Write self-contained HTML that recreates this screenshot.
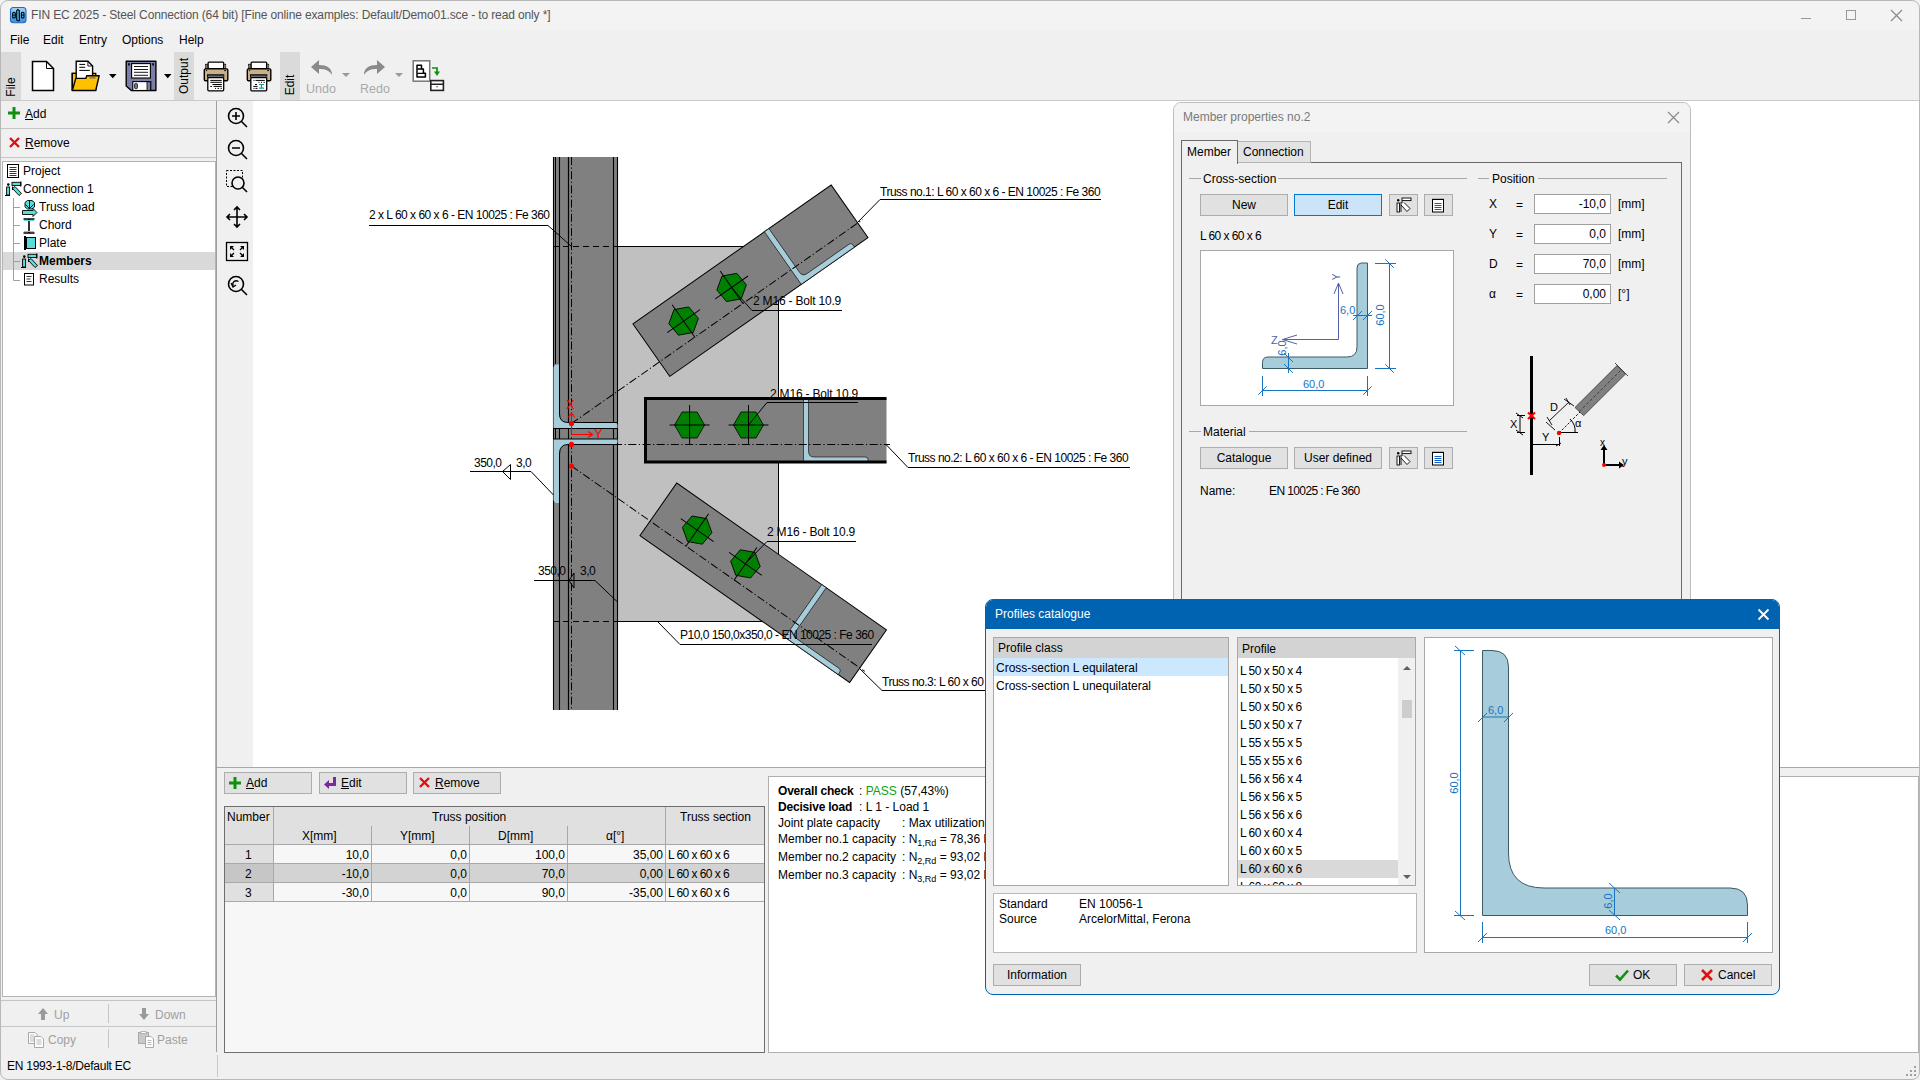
<!DOCTYPE html>
<html><head><meta charset="utf-8">
<style>
*{box-sizing:border-box;margin:0;padding:0}
html,body{width:1920px;height:1080px;overflow:hidden;background:#f0f0f0;font-family:"Liberation Sans",sans-serif;font-size:12px;color:#000}
.a{position:absolute}
.t{position:absolute;white-space:nowrap;line-height:14px}
.btn{position:absolute;background:#e1e1e1;border:1px solid #adadad}
.u{text-decoration:underline}
svg{position:absolute;overflow:visible}
.dl{letter-spacing:-0.5px}
</style></head><body>

<!-- window frame -->
<div class="a" style="left:0;top:0;width:1920px;height:30px;background:#f3f3f3"></div>
<div class="a" style="left:0;top:0;width:1920px;height:1080px;border:1px solid #b8b8b8;border-radius:8px;pointer-events:none;z-index:50"></div>
<!-- title -->
<svg style="left:0;top:0" width="30" height="30"><defs><linearGradient id="ig" x1="0" y1="0" x2="0" y2="1"><stop offset="0" stop-color="#a8d4f4"/><stop offset="1" stop-color="#3f8ad6"/></linearGradient></defs><rect x="10.5" y="7.5" width="15.5" height="15.3" rx="3" fill="url(#ig)" stroke="#1f6cc4" stroke-width="1.1"/><rect x="12.7" y="12.3" width="2.6" height="5.6" rx="1" fill="#3bc0ff" stroke="#000" stroke-width="1.1"/><path d="M12.7 15.1H15.3" stroke="#000" stroke-width=".9"/><rect x="21.4" y="12.3" width="2.6" height="5.6" rx="1" fill="#3bc0ff" stroke="#000" stroke-width="1.1"/><path d="M21.4 15.1H24" stroke="#000" stroke-width=".9"/><path d="M16.7 10.8L17.7 9.5L19.3 10.5V20.7L18.3 21L16.7 20Z" fill="#3bc0ff" stroke="#000" stroke-width="1.1"/></svg>
<div class="t" style="left:31px;top:8px;color:#555;letter-spacing:-0.13px">FIN EC 2025 - Steel Connection (64 bit) [Fine online examples: Default/Demo01.sce - to read only *]</div>
<div class="a" style="left:1801px;top:18px;width:10px;height:1px;background:#999"></div>
<div class="a" style="left:1846px;top:10px;width:10px;height:10px;border:1px solid #999"></div>
<svg style="left:1891px;top:10px" width="11" height="11"><path d="M0 0L11 11M11 0L0 11" stroke="#888" stroke-width="1.2"/></svg>
<!-- menu -->
<div class="t" style="left:10px;top:33px">File</div>
<div class="t" style="left:43px;top:33px">Edit</div>
<div class="t" style="left:79px;top:33px">Entry</div>
<div class="t" style="left:122px;top:33px">Options</div>
<div class="t" style="left:179px;top:33px">Help</div>
<!-- toolbar -->

<div class="a" style="left:1px;top:52px;width:20px;height:48px;background:#dadada"></div>
<div class="t" style="left:-5px;top:80px;transform:rotate(-90deg);width:32px;text-align:center">File</div>
<div class="a" style="left:174px;top:52px;width:20px;height:48px;background:#dadada"></div>
<div class="t" style="left:160px;top:69px;transform:rotate(-90deg);width:48px;text-align:center">Output</div>
<div class="a" style="left:280px;top:52px;width:20px;height:48px;background:#dadada"></div>
<div class="t" style="left:274px;top:78px;transform:rotate(-90deg);width:32px;text-align:center">Edit</div>
<svg style="left:31px;top:60px" width="26" height="32" viewBox="0 0 26 32"><path d="M1.5 1.5H15.5L22.5 8.5V30.5H1.5Z" fill="#fff" stroke="#000" stroke-width="1.5"/><path d="M15.5 1.5V8.5H22.5" fill="none" stroke="#000" stroke-width="1"/></svg>
<svg style="left:0;top:0" width="100" height="100"><path d="M72.3 90.5V73.4H77M92.6 73.7H95.7" fill="#ffc000" stroke="#000" stroke-width="1.4"/><rect x="72.3" y="73.4" width="23.4" height="17" fill="#ffc000"/><path d="M72.3 90.5V73.4H95.7V90.5" fill="none" stroke="#000" stroke-width="1.4"/><path d="M76.2 78V61.3H87.9L92.6 66V78" fill="#fff" stroke="#000" stroke-width="1.4"/><path d="M87.9 61.3V66H92.6" fill="none" stroke="#000" stroke-width=".9"/><path d="M79.3 64.4H85.2M79.3 67.3H85.2M79.3 70.4H89.8" stroke="#000" stroke-width="1"/><path d="M72.3 90.5L75.8 78.4H85.9L86.7 75.7H99.2L95.7 90.5Z" fill="#ffc000" stroke="#000" stroke-width="1.4" stroke-linejoin="round"/><path d="M89.5 77.9H95.5" stroke="#6a6a8a" stroke-width="1.3"/></svg>
<svg style="left:109px;top:74px" width="8" height="5"><path d="M0 0H7.5L3.75 4.3Z" fill="#000"/></svg>
<svg style="left:0;top:0" width="170" height="100"><path d="M126.2 61.3H155.9V90.5H131.3L126.2 85.9Z" fill="#7b7ea6" stroke="#000" stroke-width="1.4" stroke-linejoin="round"/><rect x="131.6" y="63.6" width="18.8" height="14.4" fill="#fff" stroke="#000" stroke-width="1.1"/><path d="M134 66.5H148M134 69.5H148M134 72.3H148M134 75.3H148" stroke="#000" stroke-width=".9"/><rect x="128.1" y="63.2" width="1.6" height="2.3" fill="#000"/><rect x="152.3" y="63.2" width="1.6" height="2.3" fill="#000"/><rect x="132.8" y="81.6" width="18" height="8.9" fill="#fff" stroke="#000" stroke-width="1.1"/><rect x="147" y="81.8" width="3.6" height="8.6" fill="#7b7ea6" stroke="#000" stroke-width=".8"/><rect x="134.6" y="83.6" width="2.8" height="5" rx=".8" fill="#7b7ea6" stroke="#000" stroke-width=".8"/></svg>
<svg style="left:164px;top:74px" width="8" height="5"><path d="M0 0H7.5L3.75 4.3Z" fill="#000"/></svg>
<svg style="left:0;top:0" width="300" height="100">
<g id="prn">
 <rect x="205.6" y="64.2" width="2.8" height="4.5" fill="#8a7a5a" stroke="#000" stroke-width=".6"/><rect x="223.4" y="64.2" width="2.4" height="4.5" fill="#c8b088" stroke="#000" stroke-width=".6"/>
 <rect x="208.1" y="62.1" width="15.6" height="6.5" rx="1" fill="#fff" stroke="#000" stroke-width="1.3"/>
 <rect x="204.3" y="68.9" width="23.5" height="11.8" rx="1.2" fill="#c8b088" stroke="#000" stroke-width="1.4"/>
 <circle cx="206.5" cy="70.6" r=".7" fill="#000"/><rect x="224.2" y="70.1" width="1.8" height="1" fill="#000"/>
 <rect x="207" y="74.2" width="17.3" height="3.4" fill="#111"/><path d="M208 76.2h15.5" stroke="#999" stroke-width="1"/>
 <rect x="207.8" y="77.7" width="15.9" height="13.1" rx="1" fill="#fff" stroke="#000" stroke-width="1.3"/>
</g>
 <path d="M210.3 80.4H221.8M210.3 82.3H221.8M212.5 84.5H221.8M210.3 86.4H212M213.5 86.4H221.8M215 88.4H216M217.5 88.4H219M220.5 88.4H221.8" stroke="#000" stroke-width="1"/>
 <use href="#prn" x="43"/>
 <path d="M253.5 80.4H254.5M255.5 80.4H264.8M258.5 82.3H259.5M261 82.3H262M263.5 82.3H264.8M255 84.5H257M253.3 86.4H257.5M253.5 88.4H254.5M255.5 88.4H257.5" stroke="#000" stroke-width="1"/>
 <path d="M259 84.5H264M261.5 84.5V88.2M259 88.2H264" stroke="#1a9a9a" stroke-width="1.2"/>
</svg>
<svg style="left:310px;top:58px" width="24" height="19" viewBox="0 0 24 19"><path d="M22 17C22 10 17 7 9 7V2L1 9L9 16V11C15 11 19 12 22 17Z" fill="#8a8a8a"/></svg>
<div class="t" style="left:306px;top:82px;color:#a9a9a9;font-size:12.5px">Undo</div>
<svg style="left:342px;top:73px" width="10" height="6"><path d="M0 0H8L4 4Z" fill="#999"/></svg>
<svg style="left:362px;top:58px" width="24" height="19" viewBox="0 0 24 19"><path d="M2 17C2 10 7 7 15 7V2L23 9L15 16V11C9 11 5 12 2 17Z" fill="#8a8a8a"/></svg>
<div class="t" style="left:360px;top:82px;color:#a9a9a9;font-size:12.5px">Redo</div>
<svg style="left:395px;top:73px" width="10" height="6"><path d="M0 0H8L4 4Z" fill="#999"/></svg>
<svg style="left:0;top:0" width="460" height="100"><rect x="413.2" y="60.8" width="16.5" height="20.4" fill="#fff" stroke="#777" stroke-width="1.5"/><path d="M417 65.3H421.5V69H423.4V73.3H425.4V77H417Z" fill="none" stroke="#000" stroke-width="1.5" stroke-linejoin="round"/><path d="M417.5 69H421.5M417.5 73.3H423.4" stroke="#000" stroke-width="1.3"/><path d="M432 68H437V72" fill="none" stroke="#109010" stroke-width="1.7"/><path d="M434 71.5H440L437 76Z" fill="#109010"/><rect x="430.8" y="80.6" width="12.6" height="9.8" fill="#fff" stroke="#222" stroke-width="1.6"/><path d="M431 84.2H443.4M437 86.3v1" stroke="#222" stroke-width="1.4"/></svg>

<div class="a" style="left:216px;top:101px;width:1px;height:951px;background:#a0a0a0"></div>
<div class="a" style="left:1px;top:128px;width:215px;height:1px;background:#c6c6c6"></div>
<div class="a" style="left:1px;top:157px;width:215px;height:1px;background:#c6c6c6"></div>
<svg style="left:8px;top:107px" width="12" height="12"><path d="M6 0V12M0 6H12" stroke="#109010" stroke-width="3"/></svg>
<div class="t" style="left:25px;top:107px"><span class="u">A</span>dd</div>
<svg style="left:9px;top:137px" width="11" height="11"><path d="M1 1L10 10M10 1L1 10" stroke="#e01010" stroke-width="2.4"/></svg>
<div class="t" style="left:25px;top:136px"><span class="u">R</span>emove</div>
<div class="a" style="left:2px;top:161px;width:214px;height:836px;background:#fff;border:1px solid #b4b4b4"></div>
<div class="a" style="left:3px;top:252px;width:212px;height:18px;background:#d9d9d9"></div>
<svg style="left:0;top:0" width="216" height="300">
 <path d="M13.5 198V280.5H20M13.5 207.5H20M13.5 225.5H20M13.5 243.5H20M13.5 261.5H20" stroke="#a0a0a0" fill="none"/>
 <rect x="7.5" y="164.5" width="11" height="13" fill="#fff" stroke="#000"/><path d="M9.5 167.5h7M9.5 169.5h7M9.5 171.5h7M9.5 173.5h7M9.5 175.5h7" stroke="#000" stroke-width=".8"/>
 <g id="cn" transform="translate(5,181)"><circle cx="3.3" cy="3.6" r="1.3" fill="#000"/><rect x="1.6" y="6" width="3" height="8" fill="#5dd" stroke="#000" stroke-width=".9"/><path d="M0 14.5H5" stroke="#000"/><rect x="7" y="1.3" width="8.7" height="3.2" fill="#5dd" stroke="#000" stroke-width=".9"/><path d="M15.8 0.5V5.5" stroke="#000" stroke-width="1.2"/><path d="M7.5 7.5L10 5.5L16.5 12.5L14 14.5Z" fill="#5dd" stroke="#000" stroke-width=".9"/><path d="M7.5 5.5V9" stroke="#000" stroke-width="1"/></g>
 <use href="#cn" x="16" y="72"/>
 <g transform="translate(22,200)"><path d="M3 7V2.5L5.5 0.5H10L12.5 2.5V7L10 9H5.5Z" fill="#5dd" stroke="#000" stroke-width=".9"/><path d="M7.5 0.5V9M3.5 4.5L7.5 8.5L11.5 4.5" stroke="#000" stroke-width=".9" fill="none"/><path d="M0.5 10.5H11V8.5L15 12.5L11 16.5V14.5H0.5Z" fill="#5dd" stroke="#000" stroke-width=".9"/></g>
 <g transform="translate(23,218)"><path d="M0.5 1H11.5M0.5 15H11.5M6 1V15" stroke="#000" stroke-width="1.6"/><path d="M1 2.5H11M1 13.5H11" stroke="#5dd" stroke-width="1.2"/></g>
 <g transform="translate(24,236)"><rect x="2.5" y="1.5" width="9" height="11" fill="#5dd" stroke="#000"/><path d="M1 0V14" stroke="#000" stroke-width="2"/></g>
 <g transform="translate(24,273)"><rect x="0.5" y="0.5" width="9" height="11.5" fill="#fff" stroke="#000"/><path d="M2.5 3.5h5M2.5 6h4M2.5 8.5h5" stroke="#000" stroke-width=".8"/></g>
</svg>
<div class="t" style="left:23px;top:164px">Project</div>
<div class="t" style="left:23px;top:182px">Connection 1</div>
<div class="t" style="left:39px;top:200px">Truss load</div>
<div class="t" style="left:39px;top:218px">Chord</div>
<div class="t" style="left:39px;top:236px">Plate</div>
<div class="t" style="left:39px;top:254px;font-weight:bold">Members</div>
<div class="t" style="left:39px;top:272px">Results</div>
<div class="a" style="left:1px;top:1000px;width:215px;height:1px;background:#c6c6c6"></div>
<div class="a" style="left:1px;top:1026px;width:215px;height:1px;background:#c6c6c6"></div>
<div class="a" style="left:108px;top:1004px;width:1px;height:19px;background:#c6c6c6"></div>
<div class="a" style="left:108px;top:1029px;width:1px;height:19px;background:#c6c6c6"></div>
<svg style="left:37px;top:1008px" width="12" height="13"><path d="M6 0L11 6H8V12H4V6H1Z" fill="#9a9a9a"/></svg>
<div class="t" style="left:54px;top:1008px;color:#a0a0a0">Up</div>
<svg style="left:138px;top:1008px" width="12" height="13"><path d="M6 12L11 6H8V0H4V6H1Z" fill="#9a9a9a"/></svg>
<div class="t" style="left:155px;top:1008px;color:#a0a0a0">Down</div>
<svg style="left:28px;top:1032px" width="18" height="16"><path d="M.5 .5H7L9 2.5V11.5H.5Z" fill="#fff" stroke="#a8a8a8"/><path d="M2 3h4M2 5h5M2 7h5M2 9h5" stroke="#a8a8a8" stroke-width=".8"/><path d="M6.5 4.5H13L15.5 7V15.5H6.5Z" fill="#fff" stroke="#a8a8a8"/><path d="M8.5 8h5M8.5 10h5M8.5 12h5" stroke="#a8a8a8" stroke-width=".8"/></svg>
<div class="t" style="left:48px;top:1033px;color:#a0a0a0">Copy</div>
<svg style="left:138px;top:1031px" width="18" height="17"><rect x=".5" y="1.5" width="10" height="11" fill="#c8c8c8" stroke="#a8a8a8"/><rect x="3" y=".5" width="5" height="2" fill="#fff" stroke="#a8a8a8" stroke-width=".8"/><path d="M7.5 5.5H13L15.5 8V16.5H7.5Z" fill="#fff" stroke="#a8a8a8"/><path d="M9.5 9.5h4M9.5 11.5h4M9.5 13.5h4" stroke="#a8a8a8" stroke-width=".8"/></svg>
<div class="t" style="left:157px;top:1033px;color:#a0a0a0">Paste</div>

<div class="a" style="left:0;top:100px;width:1920px;height:1px;background:#c8c8c8"></div>
<div class="a" style="left:253px;top:101px;width:1667px;height:667px;background:#fff"></div>

<svg style="left:226px;top:106px" width="24" height="190" viewBox="0 0 24 190">
 <g fill="none" stroke="#000" stroke-width="1.6">
  <circle cx="10" cy="10" r="7.5"/><path d="M15.5 15.5L21 21M6 10H14M10 6V14"/>
  <circle cx="10" cy="42" r="7.5"/><path d="M15.5 47.5L21 53M6 42H14"/>
  <rect x="0.5" y="64.5" width="16" height="16" stroke-dasharray="2 1.5" stroke-width="1"/>
  <circle cx="12" cy="77" r="6" fill="#f0f0f0"/><path d="M16.5 81.5L21 86"/>
  <path d="M11 101V121M1 111H21M8 104L11 101L14 104M8 118L11 121L14 118M4 108L1 111L4 114M18 108L21 111L18 114"/>
  <rect x="0.5" y="136.5" width="21" height="18" stroke-width="1.3"/>
  <path d="M4.5 140.5L8 144M17.5 140.5L14 144M4.5 150.5L8 147M17.5 150.5L14 147" stroke-width="1.3"/><path d="M4 140H8L4 144ZM18 140H14L18 144ZM4 151H8L4 147ZM18 151H14L18 147Z" fill="#000" stroke="none"/>
  <circle cx="10" cy="178" r="7.5"/><path d="M15.5 183.5L21 189"/><path d="M7 180C6 176 9 173.5 12.5 175.5" stroke-width="1.4"/><path d="M5 177L7 181L10 179" stroke-width="1.2"/>
 </g>
</svg>

<svg style="left:0;top:0" width="1920" height="1080" viewBox="0 0 1920 1080">
<defs><clipPath id="cv"><rect x="253" y="101" width="1667" height="666"/></clipPath></defs>
<g clip-path="url(#cv)">
<rect x="618" y="246.5" width="160" height="375" fill="#c0c0c0"/>
<path d="M553 246.5H778.5V621.5H553" fill="none" stroke="#000" stroke-width="1"/>
<path d="M553 246.5H618M553 621.5H618" stroke="#c0c0c0" stroke-width="1.2"/>
<rect x="553" y="157" width="65" height="553" fill="#808080"/>
<path d="M553.5 157V710" stroke="#000" stroke-width="1.1"/>
<path d="M559.5 157V710" stroke="#000" stroke-width="1.1"/>
<path d="M568.5 157V710" stroke="#000" stroke-width="1.1"/>
<path d="M613.5 157V710" stroke="#000" stroke-width="1.1"/>
<path d="M617.5 157V710" stroke="#000" stroke-width="1.1"/>
<path d="M555.5 157V364M555.5 428V439" stroke="#000" stroke-width="1"/>
<path d="M571.5 157V710" stroke="#000" stroke-width="1" stroke-dasharray="8 2.5 1.2 2.5"/>
<path d="M553 246.5H618M553 621.5H618" stroke="#000" stroke-width="1.2" stroke-dasharray="6 4"/>
<path d="M553.5 428.5V368Q553.5 364.5 557 364.5H559.5V414Q559.5 422.5 568 422.5H614Q617.5 422.5 617.5 425.5V428.5Z" fill="#a6cdd9"/>
<path d="M553.5 439V499Q553.5 503 557 503H559.5V454Q559.5 444.5 568 444.5H614Q617.5 444.5 617.5 442V439Z" fill="#a6cdd9"/>
<path d="M559.5 364.5V414Q559.5 422.5 568 422.5H617.5M553 428.5H618M553 439H618M559.5 503V454Q559.5 444.5 568 444.5H617.5" fill="none" stroke="#000" stroke-width="1"/>
<path d="M568.5 157V422M568.5 445V710" stroke="#000" stroke-width="1.1"/>
<path d="M778.5 246.5V621.5" stroke="#000" stroke-width="1"/>
<g transform="translate(571.5 423.5) rotate(-35)"><rect x="107.5" y="-46.4" width="242.0" height="64.2" fill="#808080" stroke="#000" stroke-width="1"/><path d="M268 -46.4H273.5V7Q273.5 12.3 279 12.3H330Q333 12.3 333 15V17.8H268Z" fill="#a6cdd9" stroke="#000" stroke-width=".6"/><path d="M0 0H355.5" stroke="#000" stroke-width="1" stroke-dasharray="8 2.5 1.2 2.5"/><polygon points="162.9,-28.2 164.2,-13.3 151.9,-4.7 138.3,-11.0 137.0,-25.9 149.3,-34.5" fill="#008000" stroke="#000" stroke-width=".8"/><path d="M130.6 -19.6H170.6M150.6 -39.6V0.3999999999999986" stroke="#000" stroke-width="1"/><polygon points="221.5,-28.2 222.8,-13.3 210.5,-4.7 196.9,-11.0 195.6,-25.9 207.9,-34.5" fill="#008000" stroke="#000" stroke-width=".8"/><path d="M189.2 -19.6H229.2M209.2 -39.6V0.3999999999999986" stroke="#000" stroke-width="1"/></g>
<g transform="translate(571.5 466) rotate(35)"><rect x="96" y="-46.4" width="256" height="64.2" fill="#808080" stroke="#000" stroke-width="1"/><path d="M273 -46.4H278.5V7Q278.5 12.3 284 12.3H335Q338 12.3 338 15V17.8H273Z" fill="#a6cdd9" stroke="#000" stroke-width=".6"/><path d="M0 0H358" stroke="#000" stroke-width="1" stroke-dasharray="8 2.5 1.2 2.5"/><polygon points="152.0,-11.0 138.4,-4.7 126.1,-13.3 127.4,-28.2 141.0,-34.5 153.3,-25.9" fill="#008000" stroke="#000" stroke-width=".8"/><path d="M119.69999999999999 -19.6H159.7M139.7 -39.6V0.3999999999999986" stroke="#000" stroke-width="1"/><polygon points="210.9,-11.0 197.3,-4.7 185.0,-13.3 186.3,-28.2 199.9,-34.5 212.2,-25.9" fill="#008000" stroke="#000" stroke-width=".8"/><path d="M178.6 -19.6H218.6M198.6 -39.6V0.3999999999999986" stroke="#000" stroke-width="1"/></g>
<rect x="645.5" y="398" width="241" height="64.5" fill="#808080"/>
<path d="M803.5 398H808.5V451Q808.5 457 814 457H865Q868 457 868 459.5V462.5H803.5Z" fill="#a6cdd9" stroke="#000" stroke-width=".6"/>
<path d="M886.5 398.5H645.5V462H886.5" fill="none" stroke="#000" stroke-width="3"/>
<path d="M571.5 444.5H890" stroke="#000" stroke-width="1" stroke-dasharray="8 2.5 1.2 2.5"/>
<polygon points="704.6,425.0 697.1,438.0 682.1,438.0 674.6,425.0 682.1,412.0 697.1,412.0" fill="#008000" stroke="#000" stroke-width=".8"/>
<path d="M669.6 425H709.6M689.6 405V445" stroke="#000" stroke-width="1"/>
<polygon points="763.5,425.0 756.0,438.0 741.0,438.0 733.5,425.0 741.0,412.0 756.0,412.0" fill="#008000" stroke="#000" stroke-width=".8"/>
<path d="M728.5 425H768.5M748.5 405V445" stroke="#000" stroke-width="1"/>
<g stroke="#f00" fill="none" stroke-width="1.1"><path d="M571.5 434.5V414M568.5 417L571.5 413L574.5 417M571.5 434.5H592M588 431.5L592.5 434.5L588 437.5"/></g>
<circle cx="571.5" cy="423.5" r="2.6" fill="#f00"/>
<circle cx="571.5" cy="444.4" r="2.6" fill="#f00"/>
<circle cx="571.5" cy="466" r="2.6" fill="#f00"/>
<path d="M369 225.5H548L571 246" stroke="#000" stroke-width="1" fill="none"/>
<path d="M857 223L880 199.5H1101" stroke="#000" stroke-width="1" fill="none"/>
<path d="M731 287L752 310.5H842" stroke="#000" stroke-width="1" fill="none"/>
<path d="M748.5 425L767 402.5H858" stroke="#000" stroke-width="1" fill="none"/>
<path d="M886 444.5L908 467.5H1130" stroke="#000" stroke-width="1" fill="none"/>
<path d="M470 471.5H531L553.5 495" stroke="#000" stroke-width="1" fill="none"/>
<path d="M502.5 471.5L510.5 464.5V479.5Z" stroke="#000" stroke-width="1" fill="none"/>
<path d="M534 580.5H595L617.5 602" stroke="#000" stroke-width="1" fill="none"/>
<path d="M569 580.5L574 573V588Z" stroke="#000" stroke-width="1" fill="none"/>
<path d="M745 564L767 541.5H856" stroke="#000" stroke-width="1" fill="none"/>
<path d="M658 622L680 644.5H872" stroke="#000" stroke-width="1" fill="none"/>
<path d="M860 669L882 690.5H1000" stroke="#000" stroke-width="1" fill="none"/>
</g></svg>
<div class="t" style="left:369px;top:208px;letter-spacing:-0.5px">2 x L 60 x 60 x 6 - EN 10025 : Fe 360</div>
<div class="t" style="left:880px;top:185px;letter-spacing:-0.5px">Truss no.1: L 60 x 60 x 6 - EN 10025 : Fe 360</div>
<div class="t" style="left:753px;top:294px;letter-spacing:-0.2px">2 M16 - Bolt 10.9</div>
<div class="t" style="left:770px;top:387px;letter-spacing:-0.2px">2 M16 - Bolt 10.9</div>
<div class="t" style="left:908px;top:451px;letter-spacing:-0.5px">Truss no.2: L 60 x 60 x 6 - EN 10025 : Fe 360</div>
<div class="t" style="left:474px;top:456px;letter-spacing:-0.5px">350,0</div>
<div class="t" style="left:516px;top:456px;letter-spacing:-0.5px">3,0</div>
<div class="t" style="left:538px;top:564px;letter-spacing:-0.5px">350,0</div>
<div class="t" style="left:580px;top:564px;letter-spacing:-0.5px">3,0</div>
<div class="t" style="left:767px;top:525px;letter-spacing:-0.2px">2 M16 - Bolt 10.9</div>
<div class="t" style="left:680px;top:628px;letter-spacing:-0.5px">P10,0 150,0x350,0 - EN 10025 : Fe 360</div>
<div class="t" style="left:882px;top:675px;letter-spacing:-0.5px">Truss no.3: L 60 x 60 x 6 - EN 10025 : Fe 360</div>
<div class="t" style="left:566px;top:398px;color:#f00;font-size:13px">X</div>
<div class="t" style="left:594px;top:427px;color:#f00;font-size:13px">Y</div>
<div class="a" style="left:217px;top:767px;width:1703px;height:1px;background:#a8a8a8"></div>
<div class="btn" style="left:224px;top:772px;width:88px;height:22px"></div>
<svg style="left:229px;top:777px" width="12" height="12"><path d="M6 0V12M0 6H12" stroke="#109010" stroke-width="3"/></svg>
<div class="t" style="left:246px;top:776px"><span class="u">A</span>dd</div>
<div class="btn" style="left:319px;top:772px;width:88px;height:22px"></div>
<svg style="left:324px;top:777px" width="13" height="12"><path d="M10.5 0V7.5H4" fill="none" stroke="#7a2a9a" stroke-width="3"/><path d="M0 7.5L5 3V12Z" fill="#7a2a9a"/></svg>
<div class="t" style="left:341px;top:776px"><span class="u">E</span>dit</div>
<div class="btn" style="left:413px;top:772px;width:88px;height:22px"></div>
<svg style="left:419px;top:777px" width="11" height="11"><path d="M1 1L10 10M10 1L1 10" stroke="#e01010" stroke-width="2.4"/></svg>
<div class="t" style="left:435px;top:776px"><span class="u">R</span>emove</div>
<!-- table -->
<div class="a" style="left:224px;top:806px;width:541px;height:247px;background:#f7f7f7;border:1px solid #6e6e6e"></div>
<div class="a" style="left:225px;top:807px;width:539px;height:38px;background:#e0e0e0"></div>
<div class="a" style="left:225px;top:845px;width:48px;height:57px;background:#e0e0e0"></div>
<div class="a" style="left:225px;top:864px;width:539px;height:19px;background:#d3d3d3"></div>
<div class="a" style="left:225px;top:864px;width:48px;height:19px;background:#c6c6c6"></div>
<div class="a" style="left:225px;top:844px;width:539px;height:1px;background:#a8a8a8"></div>
<div class="a" style="left:225px;top:863px;width:539px;height:1px;background:#a8a8a8"></div>
<div class="a" style="left:225px;top:882px;width:539px;height:1px;background:#a8a8a8"></div>
<div class="a" style="left:225px;top:901px;width:539px;height:1px;background:#a8a8a8"></div>
<div class="a" style="left:273px;top:807px;width:1px;height:95px;background:#a8a8a8"></div>
<div class="a" style="left:371px;top:826px;width:1px;height:76px;background:#a8a8a8"></div>
<div class="a" style="left:469px;top:826px;width:1px;height:76px;background:#a8a8a8"></div>
<div class="a" style="left:567px;top:826px;width:1px;height:76px;background:#a8a8a8"></div>
<div class="a" style="left:665px;top:807px;width:1px;height:95px;background:#a8a8a8"></div>
<div class="t" style="left:227px;top:810px">Number</div>
<div class="t" style="left:432px;top:810px">Truss position</div>
<div class="t" style="left:680px;top:810px">Truss section</div>
<div class="t" style="left:302px;top:829px">X[mm]</div>
<div class="t" style="left:400px;top:829px">Y[mm]</div>
<div class="t" style="left:498px;top:829px">D[mm]</div>
<div class="t" style="left:606px;top:829px">&#945;[&#176;]</div>
<div class="t" style="left:245px;top:848px">1</div>
<div class="t" style="left:245px;top:867px">2</div>
<div class="t" style="left:245px;top:886px">3</div>
<div class="t" style="left:274px;top:848px;width:95px;text-align:right">10,0</div>
<div class="t" style="left:274px;top:867px;width:95px;text-align:right">-10,0</div>
<div class="t" style="left:274px;top:886px;width:95px;text-align:right">-30,0</div>
<div class="t" style="left:372px;top:848px;width:95px;text-align:right">0,0</div>
<div class="t" style="left:372px;top:867px;width:95px;text-align:right">0,0</div>
<div class="t" style="left:372px;top:886px;width:95px;text-align:right">0,0</div>
<div class="t" style="left:470px;top:848px;width:95px;text-align:right">100,0</div>
<div class="t" style="left:470px;top:867px;width:95px;text-align:right">70,0</div>
<div class="t" style="left:470px;top:886px;width:95px;text-align:right">90,0</div>
<div class="t" style="left:568px;top:848px;width:95px;text-align:right">35,00</div>
<div class="t" style="left:568px;top:867px;width:95px;text-align:right">0,00</div>
<div class="t" style="left:568px;top:886px;width:95px;text-align:right">-35,00</div>
<div class="t" style="left:668px;top:848px;letter-spacing:-0.55px">L 60 x 60 x 6</div>
<div class="t" style="left:668px;top:867px;letter-spacing:-0.55px">L 60 x 60 x 6</div>
<div class="t" style="left:668px;top:886px;letter-spacing:-0.55px">L 60 x 60 x 6</div>
<!-- results -->
<div class="a" style="left:768px;top:776px;width:1151px;height:277px;background:#fff;border:1px solid #b0b0b0"></div>
<div class="t" style="left:778px;top:784px;font-weight:bold;letter-spacing:-0.2px">Overall check</div><div class="t" style="left:859px;top:784px">: <span style="color:#10a010">PASS</span> (57,43%)</div>
<div class="t" style="left:778px;top:800px;font-weight:bold;letter-spacing:-0.2px">Decisive load</div><div class="t" style="left:859px;top:800px">: L 1 - Load 1</div>
<div class="t" style="left:778px;top:816px">Joint plate capacity</div><div class="t" style="left:902px;top:816px">: Max utilization</div>
<div class="t" style="left:778px;top:832px">Member no.1 capacity</div><div class="t" style="left:902px;top:832px">: N<sub style="font-size:9px">1,Rd</sub> = 78,36 kN</div>
<div class="t" style="left:778px;top:850px">Member no.2 capacity</div><div class="t" style="left:902px;top:850px">: N<sub style="font-size:9px">2,Rd</sub> = 93,02 kN</div>
<div class="t" style="left:778px;top:868px">Member no.3 capacity</div><div class="t" style="left:902px;top:868px">: N<sub style="font-size:9px">3,Rd</sub> = 93,02 kN</div>

<div class="a" style="left:217px;top:1055px;width:1px;height:22px;background:#c8c8c8"></div>
<div class="t" style="left:7px;top:1059px;letter-spacing:-0.25px">EN 1993-1-8/Default EC</div>
<svg style="left:1906px;top:1066px" width="12" height="12"><g fill="#a0a0a0"><rect x="8" y="0" width="2" height="2"/><rect x="4" y="4" width="2" height="2"/><rect x="8" y="4" width="2" height="2"/><rect x="0" y="8" width="2" height="2"/><rect x="4" y="8" width="2" height="2"/><rect x="8" y="8" width="2" height="2"/></g></svg>

<div class="a" style="left:1173px;top:102px;width:518px;height:880px;background:#f0f0f0;border:1px solid #bdbdbd;border-radius:8px 8px 0 0;overflow:hidden">
 <div class="a" style="left:0;top:0;width:518px;height:29px;background:#f3f3f3"></div>
</div>
<div class="t" style="left:1183px;top:110px;color:#7a7a7a">Member properties no.2</div>
<svg style="left:1668px;top:112px" width="11" height="11"><path d="M0 0L11 11M11 0L0 11" stroke="#8a8a8a" stroke-width="1.2"/></svg>
<div class="a" style="left:1181px;top:162px;width:501px;height:800px;border:1px solid #6a6a6a"></div>
<div class="a" style="left:1237px;top:141px;width:74px;height:22px;background:#e3e3e3;border:1px solid #b4b4b4"></div>
<div class="a" style="left:1181px;top:140px;width:57px;height:24px;background:#f0f0f0;border:1px solid #6a6a6a;border-bottom:none"></div>
<div class="t" style="left:1187px;top:145px">Member</div>
<div class="t" style="left:1243px;top:145px">Connection</div>
<!-- cross-section group -->
<div class="a" style="left:1189px;top:178px;width:12px;height:1px;background:#a8a8a8"></div>
<div class="t" style="left:1203px;top:172px">Cross-section</div>
<div class="a" style="left:1278px;top:178px;width:189px;height:1px;background:#a8a8a8"></div>
<div class="btn" style="left:1200px;top:194px;width:88px;height:22px;text-align:center;line-height:20px">New</div>
<div class="btn" style="left:1294px;top:194px;width:88px;height:22px;text-align:center;line-height:20px;background:#cce4f7;border-color:#0078d4">Edit</div>
<div class="btn" style="left:1389px;top:194px;width:29px;height:22px"></div>
<div class="btn" style="left:1424px;top:194px;width:29px;height:22px"></div>
<svg style="left:1396px;top:197px" width="16" height="16"><rect x="1" y="6" width="2.5" height="9" fill="#fff" stroke="#000" stroke-width=".9"/><circle cx="2.2" cy="3.3" r="1.2" fill="#000"/><rect x="6" y="1" width="9" height="2.6" fill="#fff" stroke="#000" stroke-width=".9"/><path d="M5 5V15M5 5H7M5 8L11 14.5L14 11.5L8 5.5" fill="#fff" stroke="#000" stroke-width=".9"/></svg>
<svg style="left:1430px;top:197px" width="16" height="16"><rect x="2.5" y="2.5" width="11" height="12.5" fill="#fff" stroke="#000"/><path d="M3 1.5V3M5 1.5V3M7 1.5V3M9 1.5V3M11 1.5V3M13 1.5V3" stroke="#000" stroke-width=".8"/><path d="M4.5 6.5h7M4.5 8.5h7M4.5 10.5h7M4.5 12.5h7" stroke="#1060d0" stroke-width="1"/></svg>
<div class="t" style="left:1200px;top:229px;letter-spacing:-0.55px">L 60 x 60 x 6</div>
<div class="a" style="left:1200px;top:250px;width:254px;height:156px;background:#fff;border:1px solid #a8a8a8"></div>
<svg style="left:1200px;top:250px" width="254" height="156" viewBox="0 0 254 156">
 <path d="M62.5 118.5V112.5Q62.5 107 68 107H147Q157 107 157 97V18Q157 13.5 161 13H167.5V118.5Z" fill="#a6cdd9" stroke="#3a5a64" stroke-width="1"/>
 <g stroke="#1a73c0" fill="none" stroke-width="1">
  <path d="M175 13.5H196M175 118.5H196M189.5 13.5V118.5M185.2 9.2L193.8 17.8M185.2 114.2L193.8 122.8"/>
  <path d="M62.5 126V146M167.5 126V146M62.5 140.5H167.5M58.3 144.7L66.7 136.3M163.3 144.7L171.7 136.3"/>
  <path d="M153 65.5H172M153 70L162 61M163 70L172 61"/>
  <path d="M88.5 103V123M84 103L93 112M84 114L93 123"/>
 </g>
 <g stroke="#5560a8" fill="none" stroke-width="1">
  <path d="M138.5 89.5V33M138.5 89.5H82.5M134 44L138.5 33L143 44M97 85L82.5 89.5L97 94"/>
 </g>
 <text x="124" y="297" font-size="10" fill="#1a73c0" transform="rotate(-90 0 0) translate(-368 0)" style="display:none"></text>
</svg>
<div class="t" style="left:1340px;top:303px;font-size:11px;color:#1a73c0">6,0</div>
<div class="t" style="left:1303px;top:377px;font-size:11px;color:#1a73c0">60,0</div>
<div class="t" style="left:1369px;top:308px;font-size:11px;color:#1a73c0;transform:rotate(-90deg)">60,0</div>
<div class="t" style="left:1274px;top:341px;font-size:11px;color:#1a73c0;transform:rotate(-90deg)">6,0</div>
<div class="t" style="left:1334px;top:270px;font-size:10px;color:#5560a8;transform:rotate(-90deg)">Y</div>
<div class="t" style="left:1271px;top:333px;font-size:11px;color:#5560a8">Z</div>
<!-- position group -->
<div class="a" style="left:1478px;top:178px;width:11px;height:1px;background:#a8a8a8"></div>
<div class="t" style="left:1492px;top:172px">Position</div>
<div class="a" style="left:1538px;top:178px;width:129px;height:1px;background:#a8a8a8"></div>
<div class="t" style="left:1489px;top:197px">X</div><div class="t" style="left:1516px;top:198px">=</div>
<div class="t" style="left:1489px;top:227px">Y</div><div class="t" style="left:1516px;top:228px">=</div>
<div class="t" style="left:1489px;top:257px">D</div><div class="t" style="left:1516px;top:258px">=</div>
<div class="t" style="left:1489px;top:287px">&#945;</div><div class="t" style="left:1516px;top:288px">=</div>
<div class="a" style="left:1534px;top:194px;width:77px;height:20px;background:#fff;border:1px solid #a0a0a0"></div>
<div class="a" style="left:1534px;top:224px;width:77px;height:20px;background:#fff;border:1px solid #a0a0a0"></div>
<div class="a" style="left:1534px;top:254px;width:77px;height:20px;background:#fff;border:1px solid #a0a0a0"></div>
<div class="a" style="left:1534px;top:284px;width:77px;height:20px;background:#fff;border:1px solid #a0a0a0"></div>
<div class="t" style="left:1534px;top:197px;width:72px;text-align:right">-10,0</div>
<div class="t" style="left:1534px;top:227px;width:72px;text-align:right">0,0</div>
<div class="t" style="left:1534px;top:257px;width:72px;text-align:right">70,0</div>
<div class="t" style="left:1534px;top:287px;width:72px;text-align:right">0,00</div>
<div class="t" style="left:1618px;top:197px">[mm]</div>
<div class="t" style="left:1618px;top:227px">[mm]</div>
<div class="t" style="left:1618px;top:257px">[mm]</div>
<div class="t" style="left:1618px;top:287px">[&#176;]</div>
<!-- position diagram -->
<svg style="left:1500px;top:345px" width="150" height="135" viewBox="0 0 150 135">
 <path d="M31.5 11V130" stroke="#000" stroke-width="3"/>
 <path d="M28 67.5L35 74M35 67.5L28 74" stroke="#f00" stroke-width="2.2"/>
 <path d="M75 62.5L117 20.6L125.5 29L83.7 70.6Z" fill="#808080" stroke="#333" stroke-width=".8"/>
 <path d="M79.3 66.5L121.3 24.8" stroke="#222" stroke-width=".7" stroke-dasharray="3 2"/>
 <path d="M115 18L128 31" stroke="#222" stroke-width=".8"/>
 <path d="M59 88L80 67" stroke="#000" stroke-width=".9" stroke-dasharray="2.5 1.5"/>
 <path d="M49 76L69 57M46 77L55 85M64 54L74 61M47 72L52 80M66 53L70 60" stroke="#000" stroke-width=".9"/>
 <path d="M61 87.5H78M75 87.5Q76 80 70 74" stroke="#000" stroke-width="1" fill="none"/>
 <path d="M17 70.5H25M17 87.5H25M20 70.5V87.5M16 68L23 73M16 85L23 90" stroke="#000" stroke-width="1" fill="none"/>
 <path d="M33 99.5H60M59.5 92V101M56 101L61 98" stroke="#000" stroke-width="1" fill="none"/>
 <circle cx="59" cy="88" r="2.2" fill="#f00"/>
 <path d="M104 120V104M104 120H121" stroke="#000" stroke-width="2"/>
 <path d="M100.5 105L104 100L107.5 105ZM119 116.5L124 120L119 123.5Z" fill="#000"/>
 <circle cx="104" cy="120" r="2" fill="#f00"/>
</svg>
<div class="t" style="left:1550px;top:400px;font-size:11px">D</div>
<div class="t" style="left:1575px;top:416px;font-size:11px">&#945;</div>
<div class="t" style="left:1510px;top:417px;font-size:11px">X</div>
<div class="t" style="left:1542px;top:430px;font-size:11px">Y</div>
<div class="t" style="left:1600px;top:436px;font-size:10px">x</div>
<div class="t" style="left:1622px;top:454px;font-size:11px">y</div>
<!-- material group -->
<div class="a" style="left:1189px;top:431px;width:12px;height:1px;background:#a8a8a8"></div>
<div class="t" style="left:1203px;top:425px">Material</div>
<div class="a" style="left:1249px;top:431px;width:218px;height:1px;background:#a8a8a8"></div>
<div class="btn" style="left:1200px;top:447px;width:88px;height:22px;text-align:center;line-height:20px">Catalogue</div>
<div class="btn" style="left:1294px;top:447px;width:88px;height:22px;text-align:center;line-height:20px">User defined</div>
<div class="btn" style="left:1389px;top:447px;width:29px;height:22px"></div>
<div class="btn" style="left:1424px;top:447px;width:29px;height:22px"></div>
<svg style="left:1396px;top:450px" width="16" height="16"><rect x="1" y="6" width="2.5" height="9" fill="#fff" stroke="#000" stroke-width=".9"/><circle cx="2.2" cy="3.3" r="1.2" fill="#000"/><rect x="6" y="1" width="9" height="2.6" fill="#fff" stroke="#000" stroke-width=".9"/><path d="M5 5V15M5 5H7M5 8L11 14.5L14 11.5L8 5.5" fill="#fff" stroke="#000" stroke-width=".9"/></svg>
<svg style="left:1430px;top:450px" width="16" height="16"><rect x="2.5" y="2.5" width="11" height="12.5" fill="#fff" stroke="#000"/><path d="M3 1.5V3M5 1.5V3M7 1.5V3M9 1.5V3M11 1.5V3M13 1.5V3" stroke="#000" stroke-width=".8"/><path d="M4.5 6.5h7M4.5 8.5h7M4.5 10.5h7M4.5 12.5h7" stroke="#1060d0" stroke-width="1"/></svg>
<div class="t" style="left:1200px;top:484px">Name:</div>
<div class="t" style="left:1269px;top:484px;letter-spacing:-0.6px">EN 10025 : Fe 360</div>

<div class="a" style="left:985px;top:599px;width:795px;height:396px;background:#f0f0f0;border:1px solid #0063b1;border-radius:8px;overflow:hidden">
 <div class="a" style="left:0;top:0;width:795px;height:29px;background:#0063b1"></div>
</div>
<div class="t" style="left:995px;top:607px;color:#fff">Profiles catalogue</div>
<svg style="left:1758px;top:609px" width="11" height="11"><path d="M.5 .5L10.5 10.5M10.5 .5L.5 10.5" stroke="#fff" stroke-width="1.8"/></svg>
<!-- profile class list -->
<div class="a" style="left:993px;top:637px;width:236px;height:249px;background:#fff;border:1px solid #a8a8a8"></div>
<div class="a" style="left:994px;top:638px;width:234px;height:20px;background:#d3d3d3"></div>
<div class="t" style="left:998px;top:641px">Profile class</div>
<div class="a" style="left:994px;top:658px;width:234px;height:18px;background:#cce8ff"></div>
<div class="t" style="left:996px;top:661px">Cross-section L equilateral</div>
<div class="t" style="left:996px;top:679px">Cross-section L unequilateral</div>
<!-- profile list -->
<div class="a" style="left:1237px;top:637px;width:179px;height:249px;background:#fff;border:1px solid #a8a8a8;overflow:hidden">
 <div class="a" style="left:0;top:0;width:177px;height:20px;background:#d3d3d3"></div>
 <div class="t" style="left:4px;top:4px">Profile</div>
 <div class="a" style="left:0;top:222px;width:160px;height:18px;background:#d9d9d9"></div>
 <div class="a" style="left:160px;top:20px;width:17px;height:227px;background:#f0f0f0"></div>
 <div class="a" style="left:164px;top:62px;width:10px;height:18px;background:#cdcdcd"></div>
 <div class="t" style="letter-spacing:-0.5px;left:2px;top:26px">L 50 x 50 x 4</div>
 <div class="t" style="letter-spacing:-0.5px;left:2px;top:44px">L 50 x 50 x 5</div>
 <div class="t" style="letter-spacing:-0.5px;left:2px;top:62px">L 50 x 50 x 6</div>
 <div class="t" style="letter-spacing:-0.5px;left:2px;top:80px">L 50 x 50 x 7</div>
 <div class="t" style="letter-spacing:-0.5px;left:2px;top:98px">L 55 x 55 x 5</div>
 <div class="t" style="letter-spacing:-0.5px;left:2px;top:116px">L 55 x 55 x 6</div>
 <div class="t" style="letter-spacing:-0.5px;left:2px;top:134px">L 56 x 56 x 4</div>
 <div class="t" style="letter-spacing:-0.5px;left:2px;top:152px">L 56 x 56 x 5</div>
 <div class="t" style="letter-spacing:-0.5px;left:2px;top:170px">L 56 x 56 x 6</div>
 <div class="t" style="letter-spacing:-0.5px;left:2px;top:188px">L 60 x 60 x 4</div>
 <div class="t" style="letter-spacing:-0.5px;left:2px;top:206px">L 60 x 60 x 5</div>
 <div class="t" style="letter-spacing:-0.5px;left:2px;top:224px">L 60 x 60 x 6</div>
 <div class="t" style="letter-spacing:-0.5px;left:2px;top:242px">L 60 x 60 x 8</div>
 <svg style="left:164px;top:26px" width="10" height="8"><path d="M1 6L5 2L9 6Z" fill="#606060"/></svg>
 <svg style="left:164px;top:235px" width="10" height="8"><path d="M1 2L5 6L9 2Z" fill="#606060"/></svg>
</div>
<!-- info -->
<div class="a" style="left:993px;top:893px;width:424px;height:60px;background:#fff;border:1px solid #b8b8b8"></div>
<div class="t" style="left:999px;top:897px">Standard</div>
<div class="t" style="left:1079px;top:897px">EN 10056-1</div>
<div class="t" style="left:999px;top:912px">Source</div>
<div class="t" style="left:1079px;top:912px">ArcelorMittal, Ferona</div>
<div class="btn" style="left:993px;top:964px;width:88px;height:22px;text-align:center;line-height:20px">Information</div>
<div class="btn" style="left:1589px;top:964px;width:88px;height:22px"></div>
<svg style="left:1615px;top:969px" width="14" height="12"><path d="M1 6.5L5 10.5L13 1.5" fill="none" stroke="#109010" stroke-width="2.6"/></svg>
<div class="t" style="left:1633px;top:968px">OK</div>
<div class="btn" style="left:1684px;top:964px;width:88px;height:22px"></div>
<svg style="left:1701px;top:969px" width="12" height="12"><path d="M1 1L11 11M11 1L1 11" stroke="#e01010" stroke-width="2.6"/></svg>
<div class="t" style="left:1718px;top:968px">Cancel</div>
<!-- preview -->
<div class="a" style="left:1424px;top:637px;width:349px;height:316px;background:#fff;border:1px solid #a8a8a8"></div>
<svg style="left:1424px;top:637px" width="349" height="316" viewBox="0 0 349 316">
 <path d="M58.5 278.5V13.5H68Q84.5 13.5 84.5 30V216Q84.5 251 120 251H306Q323.5 251 323.5 268V278.5Z" fill="#a6cdd9" stroke="#3a5a64" stroke-width="1"/>
 <g stroke="#1a73c0" fill="none" stroke-width="1">
  <path d="M30 13.5H50M30 278.5H50M36.5 13.5V278.5M31 9L41 18M31 274L41 283"/>
  <path d="M58.5 285V306M323.5 285V306M58.5 300.5H323.5M54 305L63 296M319 305L328 296"/>
  <path d="M58.5 80H84.5M54 85L63 76M80 85L89 76"/>
  <path d="M190.5 251V278.5M185 246L196 256M185 273L196 283"/>
 </g>
</svg>
<div class="t" style="left:1488px;top:703px;font-size:11px;color:#1a73c0">6,0</div>
<div class="t" style="left:1605px;top:923px;font-size:11px;color:#1a73c0">60,0</div>
<div class="t" style="left:1443px;top:776px;font-size:11px;color:#1a73c0;transform:rotate(-90deg)">60,0</div>
<div class="t" style="left:1600px;top:894px;font-size:11px;color:#1a73c0;transform:rotate(-90deg)">6,0</div>

</body></html>
